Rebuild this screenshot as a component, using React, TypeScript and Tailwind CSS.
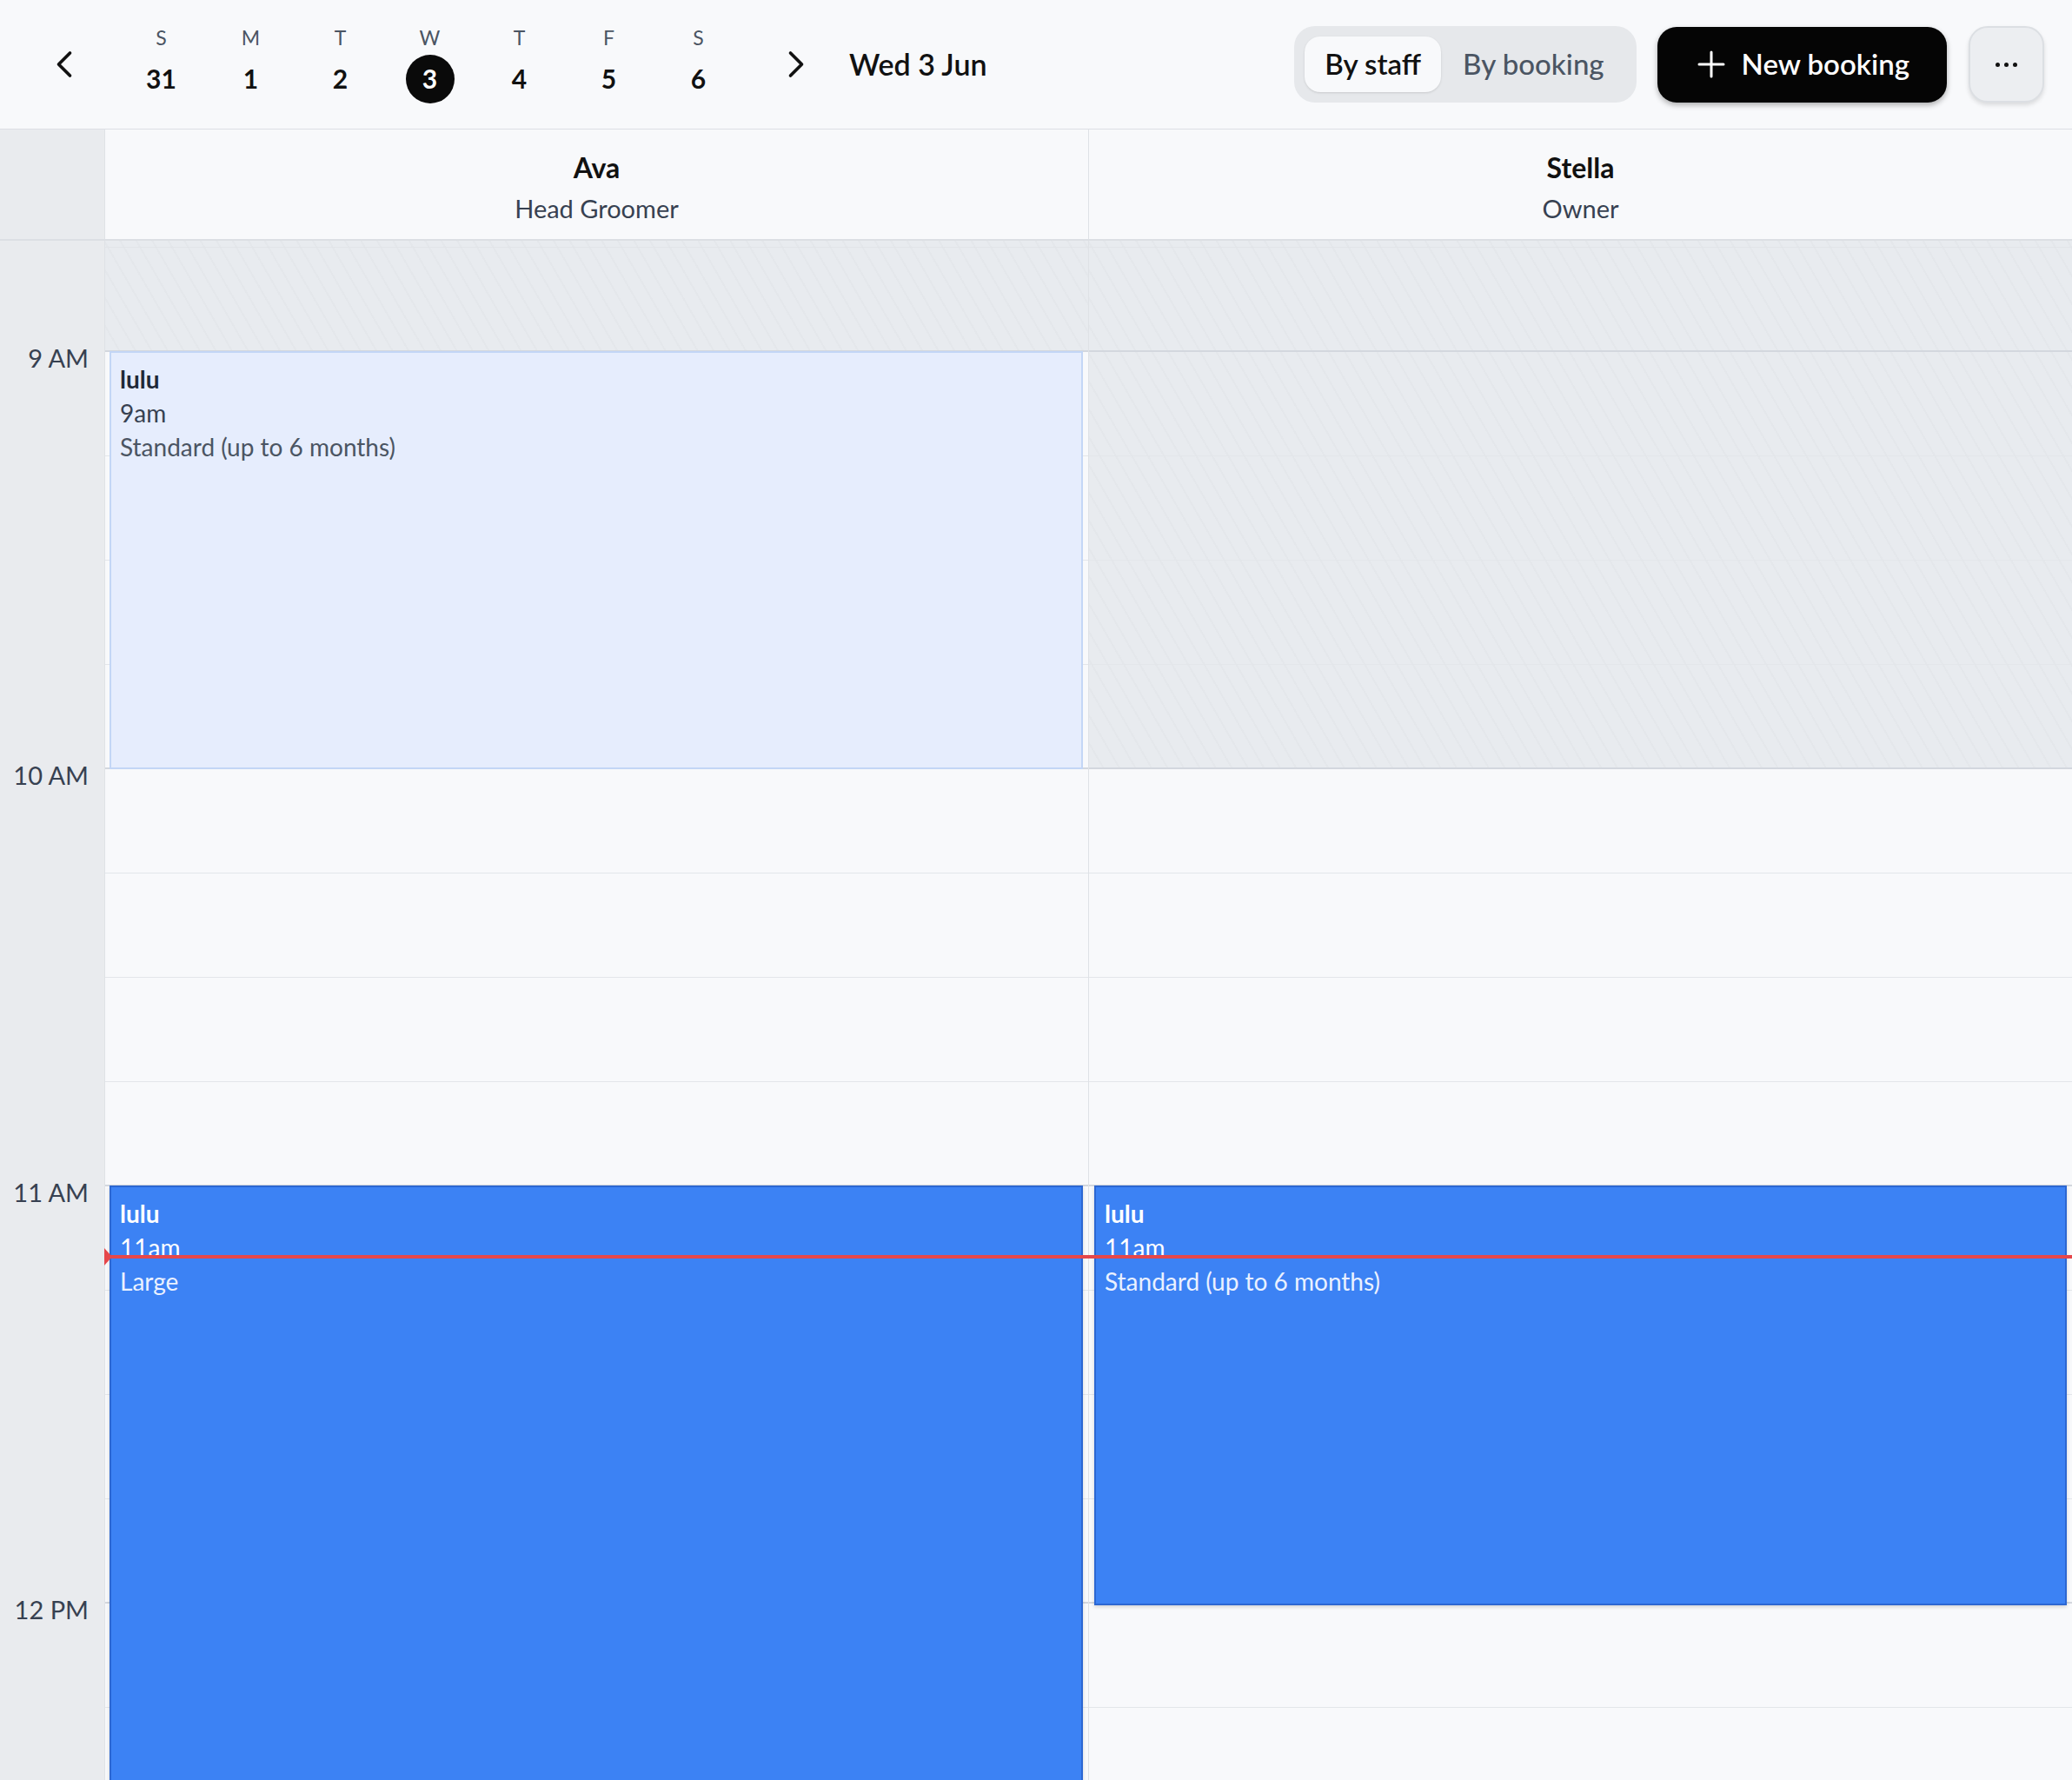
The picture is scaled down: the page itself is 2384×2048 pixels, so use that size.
import React from "react";

const FONT = { fontFamily: "Lato, 'Open Sans', sans-serif" };

const days = [
  { l: "S", n: "31" },
  { l: "M", n: "1" },
  { l: "T", n: "2" },
  { l: "W", n: "3", sel: true },
  { l: "T", n: "4" },
  { l: "F", n: "5" },
  { l: "S", n: "6" },
];

const slotCount = 16;

function Chevron({ dir }: { dir: "l" | "r" }) {
  return (
    <svg width="52" height="52" viewBox="0 0 24 24" fill="none" stroke="#111" strokeWidth="1.7" strokeLinecap="round" strokeLinejoin="round">
      {dir === "l" ? <path d="m15 18-6-6 6-6" /> : <path d="m9 18 6-6-6-6" />}
    </svg>
  );
}

function Slots() {
  return (
    <div className="flex flex-col">
      <div className="h-[8px] border-b border-[#e1e4e8]" />
      {Array.from({ length: slotCount }).map((_, i) => (
        <div
          key={i}
          className={
            i % 4 === 0
              ? "h-[120px] shrink-0 border-b-2 border-[#d3d7de]"
              : "h-[120px] shrink-0 border-b border-[#e3e6ea]"
          }
        />
      ))}
    </div>
  );
}

function Hatch({ h }: { h: string }) {
  return (
    <div
      className={
        "absolute left-0 right-0 top-0 bg-[repeating-linear-gradient(60deg,#e8ebef_0px,#e8ebef_14px,#e4e7eb_14px,#e4e7eb_16px)] " +
        h
      }
    />
  );
}

function EventText({ name, time, service, light }: { name: string; time: string; service: string; light?: boolean }) {
  return (
    <div className="px-[10px] pt-[11px] text-[28px] leading-[39px]">
      <div className={light ? "font-bold text-[#1f2937]" : "font-bold text-white"}>{name}</div>
      <div className={light ? "text-[#374151]" : "text-white"}>{time}</div>
      <div className={light ? "text-[#4b5563]" : "text-[#eaf1ff]"}>{service}</div>
    </div>
  );
}

export default function App() {
  return (
    <div className="w-[2384px] h-[2048px] overflow-hidden bg-[#f8f9fb] flex flex-col" style={FONT}>
      {/* Top bar */}
      <div className="h-[149px] shrink-0 border-b border-[#dcdfe4] flex items-center pl-[48px] pr-[32px]">
        <button className="w-[52px] h-[52px] flex items-center justify-center">
          <Chevron dir="l" />
        </button>
        <div className="ml-[34px] flex">
          {days.map((d, i) => (
            <div key={i} className="w-[103px] flex flex-col items-center">
              <div className="text-[23px] leading-[26px] text-[#4b5563] mb-[7px]">{d.l}</div>
              <div
                className={
                  d.sel
                    ? "w-[56px] h-[56px] rounded-full bg-[#0a0a0a] text-white flex items-center justify-center text-[30px] font-bold"
                    : "w-[56px] h-[56px] flex items-center justify-center text-[30px] font-bold text-[#111]"
                }
              >
                {d.n}
              </div>
            </div>
          ))}
        </div>
        <button className="ml-[35px] w-[52px] h-[52px] flex items-center justify-center">
          <Chevron dir="r" />
        </button>
        <div className="ml-[35px] text-[34px] font-semibold text-[#111] pb-[2px]">Wed 3 Jun</div>
        <div className="flex-1" />
        <div className="h-[88px] rounded-[24px] bg-[#e6e8eb] p-[12px] flex items-center">
          <div className="h-[64px] px-[23px] rounded-[18px] bg-[#f8f9fb] shadow-sm flex items-center text-[33px] font-semibold text-[#111]">
            By staff
          </div>
          <div className="h-[64px] pl-[25px] pr-[25px] flex items-center text-[33px] font-medium text-[#4b5563]">By booking</div>
        </div>
        <button className="ml-[24px] h-[87px] pl-[45px] pr-[43px] rounded-[22px] bg-[#050505] shadow-[0_3px_6px_rgba(0,0,0,0.3)] flex items-center gap-[18px] text-white text-[33px] font-semibold">
          <svg width="34" height="34" viewBox="0 0 34 34" stroke="white" strokeWidth="3" strokeLinecap="round">
            <path d="M17 3v28M3 17h28" />
          </svg>
          New booking
        </button>
        <button className="ml-[25px] w-[87px] h-[88px] rounded-[22px] bg-[#eceef1] border-2 border-[#dcdfe3] shadow-[0_3px_5px_rgba(0,0,0,0.12)] flex items-center justify-center gap-[5px]">
          <span className="w-[5px] h-[5px] rounded-full bg-[#111]" />
          <span className="w-[5px] h-[5px] rounded-full bg-[#111]" />
          <span className="w-[5px] h-[5px] rounded-full bg-[#111]" />
        </button>
      </div>

      {/* Staff header */}
      <div className="h-[128px] shrink-0 border-b-2 border-[#dcdfe4] flex">
        <div className="w-[120px] shrink-0 bg-[#e9ebee]" />
        <div className="flex-1 border-l border-[#dfe2e6] flex flex-col items-center pt-[26px]">
          <div className="text-[32px] leading-[36px] font-bold text-[#111]">Ava</div>
          <div className="mt-[11px] text-[29px] leading-[36px] text-[#374151]">Head Groomer</div>
        </div>
        <div className="flex-1 border-l border-[#dfe2e6] flex flex-col items-center pt-[26px]">
          <div className="text-[32px] leading-[36px] font-bold text-[#111]">Stella</div>
          <div className="mt-[11px] text-[29px] leading-[36px] text-[#374151]">Owner</div>
        </div>
      </div>

      {/* Body */}
      <div className="relative flex-1 flex overflow-hidden">
        <div className="w-[120px] shrink-0 bg-[#e9ebee] flex flex-col items-end pr-[18px] text-[29px] leading-[32px] text-[#374151]">
          <div className="h-[119px] shrink-0" />
          {["9 AM", "10 AM", "11 AM", "12 PM"].map((t) => (
            <div key={t} className="h-[480px] shrink-0">
              {t}
            </div>
          ))}
        </div>

        {/* Ava column */}
        <div className="relative flex-1 border-l border-[#dfe2e6]">
          <Hatch h="h-[128px]" />
          <div className="relative">
            <Slots />
          </div>
          <div className="absolute left-[5px] right-[6px] top-[127px] h-[481px] bg-[#e6edfd] border-2 border-[#c3d6f6]">
            <EventText name="lulu" time="9am" service="Standard (up to 6 months)" light />
          </div>
          <div className="absolute left-[5px] right-[6px] top-[1087px] h-[961px] bg-[#3c82f4] border-2 border-[#2c67d2] shadow-[0_2px_4px_rgba(0,0,0,0.15)]">
            <EventText name="lulu" time="11am" service="Large" />
          </div>
        </div>

        {/* Stella column */}
        <div className="relative flex-1 border-l border-[#dfe2e6]">
          <Hatch h="h-[608px]" />
          <div className="relative">
            <Slots />
          </div>
          <div className="absolute left-[6px] right-[6px] top-[1087px] h-[483px] bg-[#3c82f4] border-2 border-[#2c67d2] shadow-[0_2px_4px_rgba(0,0,0,0.15)]">
            <EventText name="lulu" time="11am" service="Standard (up to 6 months)" />
          </div>
        </div>

        {/* Current time */}
        <div className="absolute left-[120px] right-0 top-[1167px] h-[4px] bg-[#e5474b]">
          <div className="absolute left-0 top-[-8px] w-0 h-0 border-y-[10px] border-y-transparent border-l-[9px] border-l-[#e5474b]" />
        </div>
      </div>
    </div>
  );
}
